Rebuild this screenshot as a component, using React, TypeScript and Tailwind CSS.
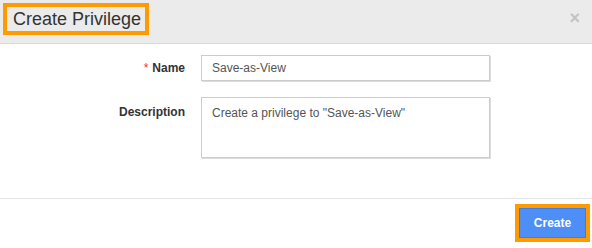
// Create Privilege modal — grey header, white body, blue Create button with orange highlight boxes

const fields = {
  name: 'Save-as-View',
  description: 'Create a privilege to "Save-as-View"',
}

export default function App() {
  return (
    <div className="w-[592px] h-[248px] bg-white flex flex-col overflow-hidden" style={{ fontFamily: '"Liberation Sans", Arial, sans-serif' }}>

      {/* Header */}
      <div className="h-[44px] flex items-start justify-between bg-[#ebebeb] border-b border-[#d9d9d9] shrink-0">
        <div className="ml-[3px] mt-[3px] w-[146px] h-[32px] border-4 border-[#ff9a00] flex items-center pl-[6px]">
          <h1 className="text-[18px] leading-none text-[#333]">Create Privilege</h1>
        </div>
        <span className="mr-[12px] mt-[9px] text-[18px] leading-none font-bold text-[#c3c3c3]">×</span>
      </div>

      {/* Body */}
      <div className="flex-1 flex flex-col gap-[16px] pt-[11px]">
        <div className="flex items-center gap-[16px]">
          <label className="w-[185px] text-right text-[12px] font-bold text-[#333]">
            <span className="text-[#e33] font-normal mr-[4px]">*</span>Name
          </label>
          <div className="w-[289px] h-[26px] border border-[#ccc] shadow-[1px_1px_0_#ddd] px-[10px] flex items-center text-[12px] text-[#555]">
            {fields.name}
          </div>
        </div>
        <div className="flex items-start gap-[16px]">
          <label className="w-[185px] text-right text-[12px] font-bold text-[#333] pt-[6px]">Description</label>
          <div className="w-[289px] h-[61px] border border-[#ccc] shadow-[1px_1px_0_#ddd] px-[10px] pt-[6px] text-[12px] text-[#555]">
            {fields.description}
          </div>
        </div>
      </div>

      {/* Footer */}
      <div className="h-[50px] border-t border-[#e5e5e5] flex justify-end items-start pt-[5px] pr-[2px] shrink-0">
        <div className="border-4 border-[#ff9a00]">
          <button className="w-[67px] h-[30px] bg-[#4d8ef7] border border-[#3b7de9] text-white text-[12px] font-bold">
            Create
          </button>
        </div>
      </div>
    </div>
  )
}
